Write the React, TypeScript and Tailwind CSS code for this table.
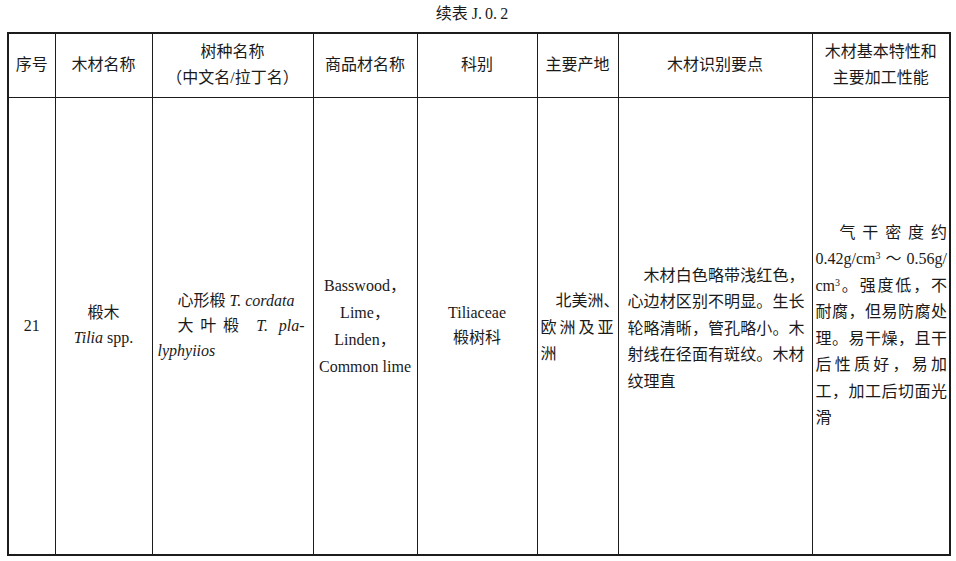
const serif = "font-['Liberation_Serif','Noto_Sans_CJK_SC',serif]";

const headers: { label: string[] }[] = [
  { label: ['序号'] },
  { label: ['木材名称'] },
  { label: ['树种名称', '（中文名/拉丁名）'] },
  { label: ['商品材名称'] },
  { label: ['科别'] },
  { label: ['主要产地'] },
  { label: ['木材识别要点'] },
  { label: ['木材基本特性和', '主要加工性能'] },
];

// one justified line (stretched edge to edge, like typeset Chinese text)
function Jline({ children, indent = '' }: { children: React.ReactNode; indent?: string }) {
  return <div className={`text-justify [text-align-last:justify] ${indent}`}>{children}</div>;
}

function Line({ children, className = '' }: { children: React.ReactNode; className?: string }) {
  return <div className={`whitespace-nowrap ${className}`}>{children}</div>;
}

const cell = 'border border-[#1c1c1c] align-middle p-0';

export default function App() {
  return (
    <div className={`w-[956px] h-[561px] bg-white text-[#1a1a1a] ${serif} text-[16px]`}>
      <div className="h-[32px] pt-[5px] pr-[12px] text-center leading-[18px]">
        续表 J.&thinsp;0.&thinsp;2
      </div>
      <table className="ml-[7px] w-[942px] table-fixed border-collapse border-2 border-[#1c1c1c]">
        <colgroup>
          <col className="w-[47px]" />
          <col className="w-[97px]" />
          <col className="w-[161px]" />
          <col className="w-[104px]" />
          <col className="w-[120px]" />
          <col className="w-[81px]" />
          <col className="w-[194px]" />
          <col className="w-[138px]" />
        </colgroup>
        <thead>
          <tr className="h-[64px]">
            {headers.map((h, i) => (
              <th key={i} className={`${cell} font-normal text-center leading-[26px]`}>
                {h.label.map((l, j) => (
                  <div key={j}>{l}</div>
                ))}
              </th>
            ))}
          </tr>
        </thead>
        <tbody>
          <tr className="h-[458px]">
            <td className={`${cell} text-center`}>21</td>

            <td className={`${cell} text-center leading-[25px] pb-[1px]`}>
              <div>椴木</div>
              <div>
                <i>Tilia</i> spp.
              </div>
            </td>

            <td className={`${cell} pl-[5px] pr-[8px] leading-[25px]`}>
              <Line className="pl-[20px]">
                心形椴 <i>T. cordata</i>
              </Line>
              <Jline indent="pl-[20px]">
                大叶椴 <i>T. pla-</i>
              </Jline>
              <Line>
                <i>lyphyiios</i>
              </Line>
            </td>

            <td className={`${cell} text-center leading-[27px]`}>
              <div>Basswood，</div>
              <div>Lime，</div>
              <div>Linden，</div>
              <div className="whitespace-nowrap">Common lime</div>
            </td>

            <td className={`${cell} text-center leading-[25px] pb-[1px]`}>
              <div>Tiliaceae</div>
              <div>椴树科</div>
            </td>

            <td className={`${cell} pl-[3px] pr-[4px] leading-[26.5px] pt-[4px]`}>
              <Line className="pl-[15px]">北美洲、</Line>
              <Jline>欧洲及亚</Jline>
              <Line>洲</Line>
            </td>

            <td className={`${cell} pl-[9px] pr-[7px] leading-[26.5px] pt-[6px]`}>
              <Jline indent="pl-[16px]">木材白色略带浅红色，</Jline>
              <Jline>心边材区别不明显。生长</Jline>
              <Jline>轮略清晰，管孔略小。木</Jline>
              <Jline>射线在径面有斑纹。木材</Jline>
              <Line>纹理直</Line>
            </td>

            <td className={`${cell} pl-[3px] pr-[2px] leading-[26.5px]`}>
              <Jline indent="pl-[24px]">气干密度约</Jline>
              <Jline>
                0.42g/cm<sup className="text-[10px]">3</sup>～0.56g/
              </Jline>
              <Jline>
                cm<sup className="text-[10px]">3</sup>。强度低，不
              </Jline>
              <Jline>耐腐，但易防腐处</Jline>
              <Jline>理。易干燥，且干</Jline>
              <Jline>后性质好，易加</Jline>
              <Jline>工，加工后切面光</Jline>
              <Line>滑</Line>
            </td>
          </tr>
        </tbody>
      </table>
    </div>
  );
}
